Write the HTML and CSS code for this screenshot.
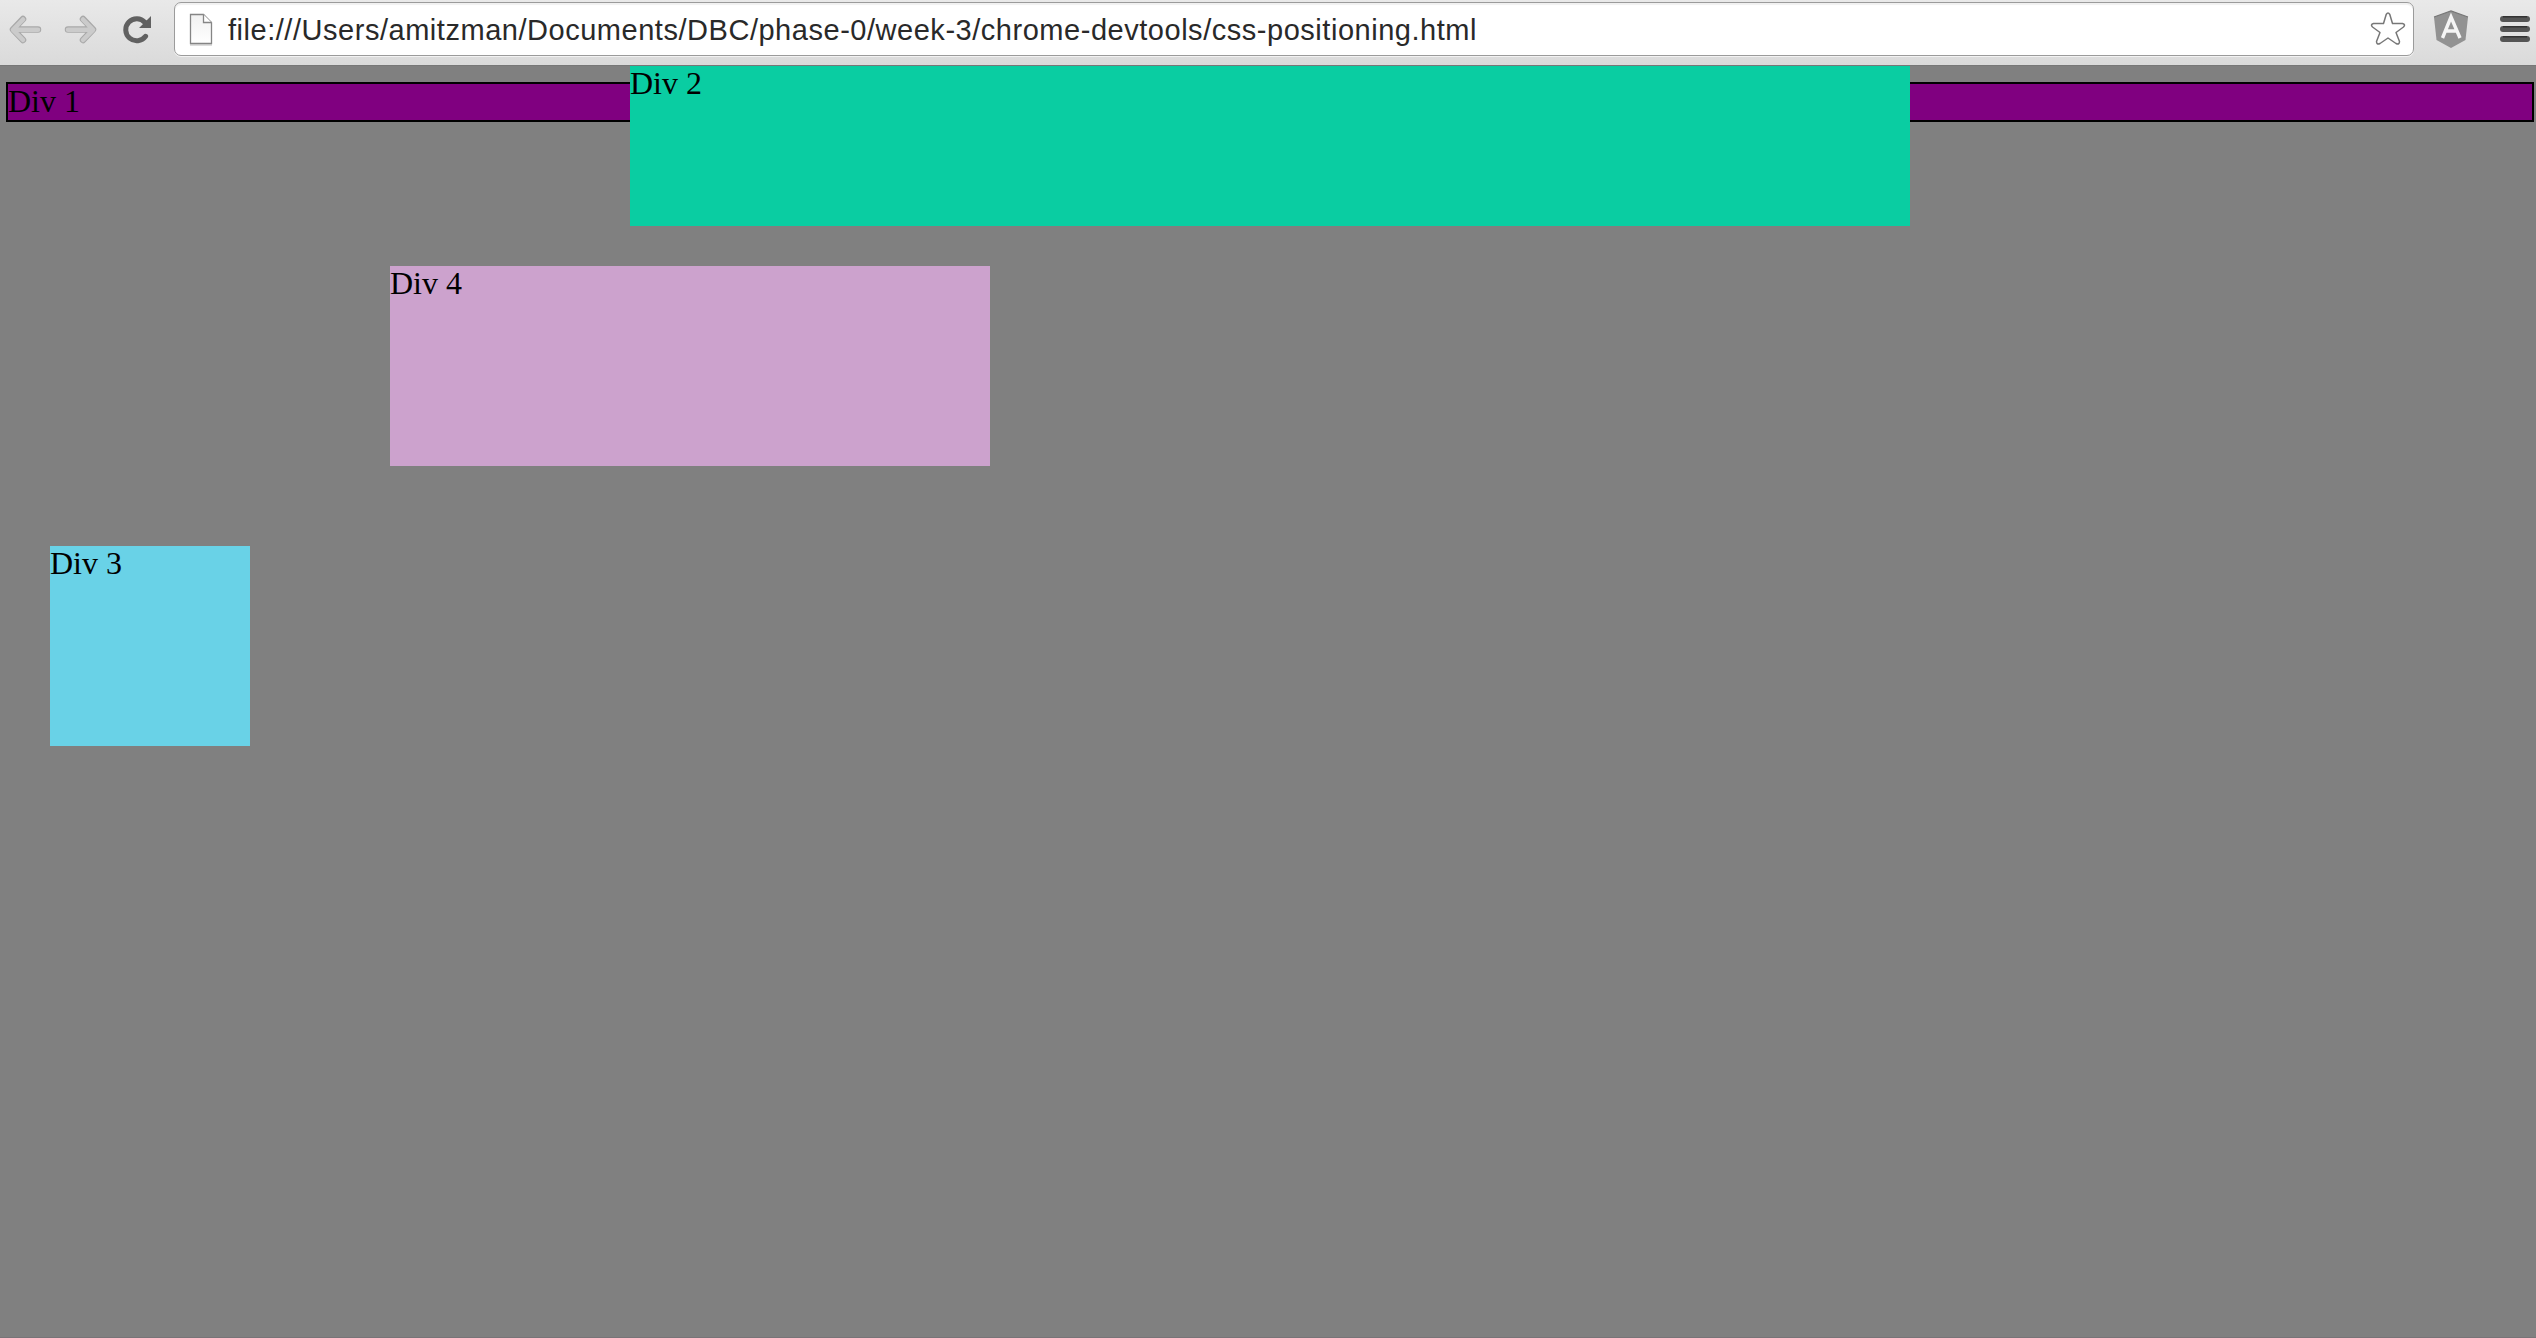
FILE: index.html
```html
<!DOCTYPE html>
<html lang="en">
<head>
<meta charset="utf-8">
<title>css-positioning.html</title>
<link rel="stylesheet" href="styles.css">
</head>
<body>
<header class="toolbar">
  <svg class="nav" width="174" height="65" viewBox="0 0 174 65">
    <g fill="none" stroke-linecap="round" stroke-linejoin="round">
      <path d="M38 29.5H14M23 19L13 29.5L23 40" stroke="#a9a9a9" stroke-width="6.5"/>
      <path d="M38 29.8H14M23 19.5L13 29.8L23 40" stroke="#cbcbcb" stroke-width="4.5"/>
      <path d="M68 29.5H92M83 19L93 29.5L83 40" stroke="#a9a9a9" stroke-width="6.5"/>
      <path d="M68 29.8H92M83 19.5L93 29.8L83 40" stroke="#cbcbcb" stroke-width="4.5"/>
      <path d="M145 22.5A11 11 0 1 0 145.600 36.300" stroke="#616161" stroke-width="5"/>
    </g>
    <path d="M151 16V28H139L143.500 23.500L141 20L146.500 20.500Z" fill="#616161"/>
  </svg>
  <div class="address">
    <svg class="page-icon" width="26" height="36" viewBox="0 0 26 36">
      <defs><linearGradient id="paper" x2="0" y2="1"><stop stop-color="#f1f1f1"/><stop offset="1" stop-color="#fff"/></linearGradient></defs>
      <path d="M2 33H24" stroke="#ddd" stroke-width="2"/>
      <path d="M2.500 2.500H15.500L23.500 10.500V31.500H2.500Z" fill="url(#paper)" stroke="#858585" stroke-width="1.300"/>
      <path d="M15.500 2.500V10.500H23.500" fill="#fff" stroke="#858585" stroke-width="1.300"/>
    </svg>
    <span class="url">file:///Users/amitzman/Documents/DBC/phase-0/week-3/chrome-devtools/css-positioning.html</span>
    <svg class="star" width="38" height="38" viewBox="0 0 38 38">
      <path d="M17.200 4.500Q19 1.500 20.800 4.500L23.500 13.500H33.500Q37 14.500 34.500 17L27 22.500L30.500 31.500Q30.500 35 27 33.500L19 28L11 33.500Q7.500 35 7.500 31.500L11 22.500L3.500 17Q1 14.500 4.500 13.500H14.500Z" fill="#fff" stroke="#777" stroke-width="1.500" stroke-linejoin="round"/>
    </svg>
  </div>
  <svg class="actions" width="122" height="65" viewBox="2414 0 122 65">
    <path d="M2451 11L2468 17L2465.500 40L2451 48L2436.500 40L2434 17Z" fill="#929292"/>
    <path d="M2434 17L2451 11L2468 17" fill="none" stroke="#777" stroke-width="1.200"/>
    <path d="M2442.500 38L2451 17L2460 38M2445.500 31H2457" fill="none" stroke="#f5f5f5" stroke-width="3.400"/>
    <g fill="#555"><rect x="2500" y="16" width="30" height="6" rx="3"/><rect x="2500" y="26" width="30" height="6" rx="3"/><rect x="2500" y="36" width="30" height="6" rx="3"/></g>
    <path d="M2503 16.700H2527M2503 26.700H2527M2503 36.700H2527" stroke="#333" stroke-width="1.400"/>
  </svg>
</header>
<main class="page">
  <div class="box one">Div 1</div>
  <div class="box two">Div 2</div>
  <div class="box three">Div 3</div>
  <div class="box four">Div 4</div>
</main>
</body>
</html>
```
FILE: styles.css
```css
* { box-sizing: border-box; }
body {
  margin: 0;
  height: 1338px;
  display: flex;
  flex-direction: column;
  overflow: hidden;
  background: #808080;
}
.toolbar {
  display: flex;
  align-items: flex-start;
  flex: none;
  height: 66px;
  background: linear-gradient(#e9e9e9, #dadada);
  border-bottom: 1px solid #777;
}
.nav, .actions { flex: none; }
.address {
  display: flex;
  align-items: center;
  flex: 1;
  height: 54px;
  margin-top: 2px;
  padding: 0 6px 0 13px;
  background: #fff;
  border: 1px solid #9b9b9b;
  border-radius: 7px;
  box-shadow: 0 1px 0 #f2f2f2, inset 0 2px 1px #f1f1f1;
}
.page-icon { margin-top: 1px; }
.url {
  flex: 1;
  margin: 2px 0 0 14px;
  font: 29px/34px "Liberation Sans", Arial, sans-serif;
  letter-spacing: 0.53px;
  color: #292929;
  white-space: nowrap;
}
.page {
  position: relative;
  flex: 1;
  padding: 16px 2px 0 6px;
  border-bottom: 1px solid #787478;
}
.box {
  font: 32px/34px "Liberation Serif", "Times New Roman", serif;
  color: #000;
}
.one { height: 40px; background: #800080; border: 2px solid #000; }
.two, .three, .four { position: absolute; }
.two { left: 630px; top: 0; width: 1280px; height: 160px; background: #0acda2; }
.three { left: 50px; top: 480px; width: 200px; height: 200px; background: #69d2e7; }
.four { left: 390px; top: 200px; width: 600px; height: 200px; background: #cca2cd; }
```
